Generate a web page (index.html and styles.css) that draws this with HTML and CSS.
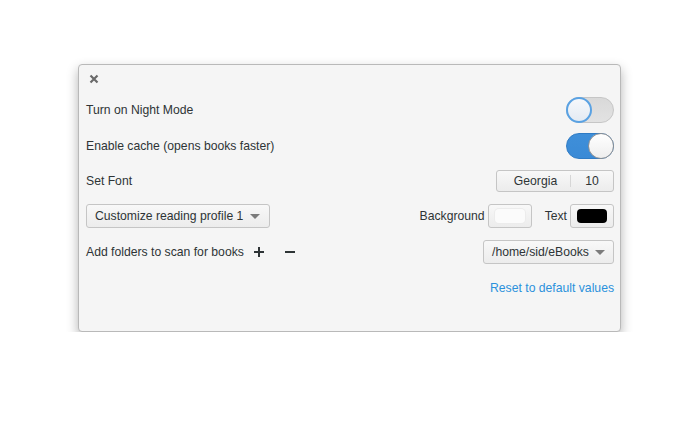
FILE: index.html
```html
<!DOCTYPE html>
<html>
<head>
<meta charset="utf-8">
<link rel="stylesheet" href="styles.css">
</head>
<body>
<div class="dialog">
  <div class="titlebar">
    <svg class="close" width="10" height="10" viewBox="0 0 10 10"><path d="M1.5 1.5 L8.5 8.5 M8.5 1.5 L1.5 8.5" stroke="#6a6a6a" stroke-width="2.2" stroke-linecap="butt"/></svg>
  </div>
  <div class="row r36">
    <span class="label">Turn on Night Mode</span>
    <span class="switch off"><span class="knob"></span></span>
  </div>
  <div class="row r36">
    <span class="label">Enable cache (opens books faster)</span>
    <span class="switch on"><span class="knob"></span></span>
  </div>
  <div class="row r34">
    <span class="label">Set Font</span>
    <span class="btn fontbtn"><span class="fname">Georgia</span><span class="sep"></span><span class="fsize">10</span></span>
  </div>
  <div class="row r36">
    <span class="btn combo profile">Customize reading profile 1<span class="arrow"></span></span>
    <span class="colors">
      <span class="label">Background</span>
      <span class="btn colorbtn"><span class="swatch white"></span></span>
      <span class="label textlbl">Text</span>
      <span class="btn colorbtn"><span class="swatch black"></span></span>
    </span>
  </div>
  <div class="row r36">
    <span class="folders">
      <span class="label">Add folders to scan for books</span>
      <svg class="icon plus" width="12" height="12" viewBox="0 0 12 12"><path d="M6 1 V11 M1 6 H11" stroke="#2e3436" stroke-width="2"/></svg>
      <svg class="icon minus" width="12" height="12" viewBox="0 0 12 12"><path d="M1 6 H11" stroke="#2e3436" stroke-width="2"/></svg>
    </span>
    <span class="btn combo folder">/home/sid/eBooks<span class="arrow"></span></span>
  </div>
  <div class="row r36 end">
    <a class="link">Reset to default values</a>
  </div>
</div>
</body>
</html>
```
FILE: styles.css
```css
html, body {
  margin: 0;
  padding: 0;
  background: #ffffff;
}
body {
  font-family: "Liberation Sans", Arial, sans-serif;
  font-size: 12.2px;
  color: #2e3436;
}
.dialog {
  margin: 64px 0 0 78px;
  width: 543px;
  height: 268px;
  box-sizing: border-box;
  background: #f5f5f5;
  border: 1px solid #b9b9b9;
  border-radius: 4px;
  box-shadow: 0 5px 12px rgba(0, 0, 0, 0.3);
  padding: 0 7px 0 7px;
}
.titlebar {
  height: 27px;
  display: flex;
  align-items: center;
  padding-left: 3px;
  box-sizing: border-box;
}
.row {
  display: flex;
  align-items: center;
  justify-content: space-between;
  margin-right: -1px;
}
.r36 { height: 36px; }
.r34 { height: 34px; }
.end { justify-content: flex-end; }
.switch {
  position: relative;
  width: 48px;
  height: 26px;
  box-sizing: border-box;
  border-radius: 13px;
  display: block;
}
.switch.off {
  background: linear-gradient(#d9d9d9, #e2e2e2);
  border: 1px solid #c6c6c6;
}
.switch.on {
  background: linear-gradient(#3f8fd9, #3a8ad6);
  border: 1px solid #2f7bc4;
}
.knob {
  position: absolute;
  top: -1px;
  width: 26px;
  height: 26px;
  box-sizing: border-box;
  border-radius: 50%;
  background: linear-gradient(#ffffff, #eeeeee);
}
.off .knob {
  left: -1px;
  border: 2px solid #5aa2e3;
  background: linear-gradient(#f6f8fb, #e4ebf3);
}
.on .knob {
  right: -1px;
  border: 1px solid #8e9093;
}
.btn {
  display: inline-flex;
  align-items: center;
  box-sizing: border-box;
  border: 1px solid #c5c5c5;
  border-radius: 3px;
  background: linear-gradient(#f8f8f8, #ececec);
}
.fontbtn {
  width: 118px;
  height: 22px;
}
.fname {
  width: 73px;
  text-align: center;
  padding-left: 4px;
  box-sizing: border-box;
}
.sep {
  width: 1px;
  height: 12px;
  background: #d6d6d6;
}
.fsize {
  flex: 1;
  text-align: center;
}
.combo {
  height: 24px;
  padding: 0 9px 0 8px;
  justify-content: space-between;
}
.profile { width: 184px; }
.folder { width: 131px; }
.arrow {
  width: 0;
  height: 0;
  border-left: 5px solid transparent;
  border-right: 5px solid transparent;
  border-top: 5px solid #7b7b7b;
  margin-left: 6px;
}
.colors {
  display: flex;
  align-items: center;
}
.colorbtn {
  width: 44px;
  height: 24px;
  padding: 4px 6px;
  margin-left: 3px;
}
.swatch {
  display: block;
  width: 100%;
  height: 100%;
  border-radius: 4px;
}
.swatch.white {
  background: #fbfbfb;
  box-shadow: 0 0 0 1px #ececec;
}
.swatch.black { background: #000000; }
.textlbl { margin-left: 13px; }
.folders {
  display: flex;
  align-items: center;
}
.plus { margin-left: 9px; }
.minus { margin-left: 19px; }
.link {
  color: #2b91dc;
  cursor: pointer;
}
```
